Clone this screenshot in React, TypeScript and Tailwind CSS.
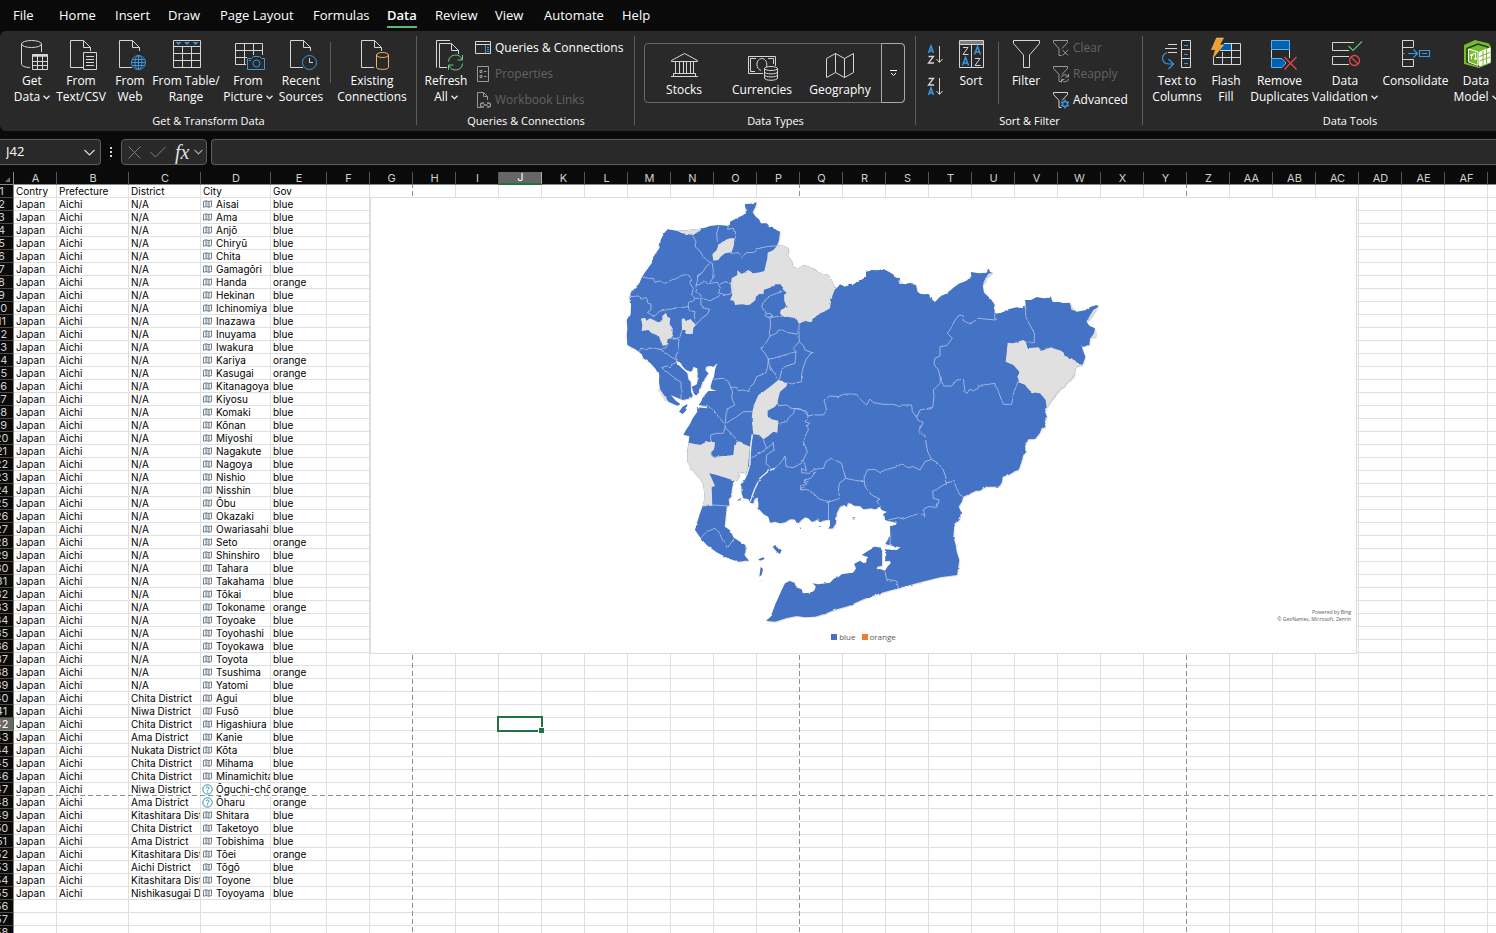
import type { ReactNode } from "react";

const tabs = [
  { name: "File", w: "w-[46px]" },
  { name: "Home", w: "w-[56px]" },
  { name: "Insert", w: "w-[53px]" },
  { name: "Draw", w: "w-[52px]" },
  { name: "Page Layout", w: "w-[93px]" },
  { name: "Formulas", w: "w-[74px]" },
  { name: "Data", w: "w-[48px]" },
  { name: "Review", w: "w-[60px]" },
  { name: "View", w: "w-[49px]" },
  { name: "Automate", w: "w-[78px]" },
  { name: "Help", w: "w-[40px]" },
];

const columns: { name: string; w: string }[] = [
  { name: "A", w: "w-[43px]" },
  { name: "B", w: "w-[72px]" },
  { name: "C", w: "w-[72px]" },
  { name: "D", w: "w-[70px]" },
  { name: "E", w: "w-[56px]" },
  ..."F G H I J K L M N O P Q R S T U V W X Y Z AA AB AC AD AE AF AG AH AI AJ AK AL AM AN AO AP AQ AR AS AT"
    .split(" ")
    .map((name) => ({ name, w: "w-[43px]" })),
];

const cities: [string, string, string][] = (
  "N/A|Aisai|blue;N/A|Ama|blue;N/A|Anjō|blue;N/A|Chiryū|blue;N/A|Chita|blue;N/A|Gamagōri|blue;N/A|Handa|orange;" +
  "N/A|Hekinan|blue;N/A|Ichinomiya|blue;N/A|Inazawa|blue;N/A|Inuyama|blue;N/A|Iwakura|blue;N/A|Kariya|orange;" +
  "N/A|Kasugai|orange;N/A|Kitanagoya|blue;N/A|Kiyosu|blue;N/A|Komaki|blue;N/A|Kōnan|blue;N/A|Miyoshi|blue;" +
  "N/A|Nagakute|blue;N/A|Nagoya|blue;N/A|Nishio|blue;N/A|Nisshin|blue;N/A|Ōbu|blue;N/A|Okazaki|blue;" +
  "N/A|Owariasahi|blue;N/A|Seto|orange;N/A|Shinshiro|blue;N/A|Tahara|blue;N/A|Takahama|blue;N/A|Tōkai|blue;" +
  "N/A|Tokoname|orange;N/A|Toyoake|blue;N/A|Toyohashi|blue;N/A|Toyokawa|blue;N/A|Toyota|blue;N/A|Tsushima|orange;" +
  "N/A|Yatomi|blue;Chita District|Agui|blue;Niwa District|Fusō|blue;Chita District|Higashiura|blue;" +
  "Ama District|Kanie|blue;Nukata District|Kōta|blue;Chita District|Mihama|blue;Chita District|Minamichita|blue;" +
  "Niwa District|Ōguchi-chō|orange;Ama District|Ōharu|orange;Kitashitara District|Shitara|blue;" +
  "Chita District|Taketoyo|blue;Ama District|Tobishima|blue;Kitashitara District|Tōei|orange;" +
  "Aichi District|Tōgō|blue;Kitashitara District|Toyone|blue;Nishikasugai District|Toyoyama|blue"
)
  .split(";")
  .map((r) => r.split("|") as [string, string, string]);

const W = "#d6d6d6";
const G = "#9a9a9a";
const B = "#3a96dd";

function Icon({ children, size = 32 }: { children: ReactNode; size?: number }) {
  return (
    <svg
      aria-hidden="true"
      width={size}
      height={size}
      viewBox={`0 0 ${size} ${size}`}
      fill="none"
      stroke={W}
      className="shrink-0 overflow-visible"
    >
      {children}
    </svg>
  );
}

const Doc = () => <path d="M18 29.500H5.500V2.500H18.500L25.500 9.500V13M18.500 2.500V9.500H25.500" />;

const GetDataIcon = () => (
  <Icon>
    <ellipse cx="15.500" cy="6" rx="10" ry="3.500" />
    <path d="M5.500 6V26C5.500 28 9 29.500 14 29.500M25.500 6V14" />
    <path d="M16.500 16.500H31.500V31.500H16.500ZM16.500 18H31.500M16.500 23.500H31.500M16.500 27.500H31.500M21.500 18V31.500M26.500 18V31.500" />
    <path d="M16.500 17.500H31.500" strokeWidth="2" />
  </Icon>
);
const TextIcon = () => (
  <Icon>
    <Doc />
    <path d="M18.500 14.500H31.500V31.500H18.500Z" />
    <path d="M21 18.500H29M21 21.500H29M21 24.500H29M21 27.500H29" />
  </Icon>
);
const WebIcon = () => (
  <Icon>
    <Doc />
    <g stroke={B}>
      <circle cx="24.500" cy="24.500" r="7" />
      <ellipse cx="24.500" cy="24.500" rx="3.500" ry="7" />
      <path d="M24.500 17.500V31.500M18.500 21.500H30.500M18.500 27.500H30.500M17.500 24.500H31.500" />
    </g>
  </Icon>
);
const TableIcon = () => (
  <Icon>
    <path d="M3.500 2.500H30.500V29.500H3.500ZM3.500 8.500H30.500M3.500 15.500H30.500M3.500 22.500H30.500M12.500 8.500V29.500M21.500 8.500V29.500" />
    <path d="M5.500 4H11.500L8.500 7ZM14 4H20L17 7ZM22.500 4H28.500L25.500 7Z" fill={B} stroke="none" />
  </Icon>
);
const PictureIcon = () => (
  <Icon>
    <path d="M14 26.500H3.500V5.500H30.500V17M3.500 12.500H30.500M3.500 19.500H15M12.500 5.500V26.500M21.500 5.500V17" />
    <path d="M15.500 20.500H19.500L21.500 18.500H27.500L29.500 20.500H32.500V31.500H15.500Z" stroke={B} />
    <circle cx="24.500" cy="25.500" r="3.500" stroke={B} />
    <path d="M17 22.500H19" stroke={B} />
  </Icon>
);
const RecentIcon = () => (
  <Icon>
    <Doc />
    <circle cx="24.500" cy="24.500" r="7" stroke={B} />
    <path d="M24.500 20V24.500H28" />
  </Icon>
);
const ExistingIcon = () => (
  <Icon>
    <Doc />
    <g stroke="#f2b35c">
      <ellipse cx="26.500" cy="17" rx="6" ry="2.500" />
      <path d="M20.500 17V29.500C20.500 32 32.500 32 32.500 29.500V17" />
    </g>
  </Icon>
);
const RefreshIcon = () => (
  <Icon>
    <path d="M20 2.500H6.500V29.500M9.500 29.500H17M9.500 29.500V5.500H21.500L28.500 12.500V16M21.500 5.500V12.500H28.500" />
    <path
      d="M18.500 23.500A7 7 0 0 1 32 21.500M32.500 25.500A7 7 0 0 1 19 27.500M32.500 17V22H27.500M18.500 32V27H23.500"
      stroke="#6cc97f"
    />
  </Icon>
);
const StocksIcon = () => (
  <Icon>
    <path d="M3.500 10.500L16.500 3.500L29.500 10.500V11.500H3.500ZM3 26.500H30M5.500 23.500H27.500V26M5.500 23.500V26M7.500 12V23M11.500 12V23M15.500 12V23M18.500 12V23M22.500 12V23M25.500 12V23" />
  </Icon>
);
const CurrencyIcon = () => (
  <Icon>
    <path d="M17 23.500H2.500V6.500H29.500V16M10 8.500H4.500V21.500H9M22 8.500H27.500V14" />
    <path d="M15 20.500C9.500 19 9.500 9 15.500 8.500C20 8.500 21.500 13 20.500 17" />
    <ellipse cx="25" cy="18.500" rx="6.500" ry="2" />
    <path d="M18.500 18.500V28C18.500 31 31.500 31 31.500 28V18.500M18.500 22C18.500 24.500 31.500 24.500 31.500 22M18.500 25C18.500 27.500 31.500 27.500 31.500 25" />
  </Icon>
);
const MapIcon = () => (
  <Icon>
    <path d="M2.500 8.500L11.500 3.500L20.500 8.500L29.500 3.500V22.500L20.500 27.500L11.500 22.500L2.500 27.500ZM11.500 3.500V22.500M20.500 8.500V27.500" />
  </Icon>
);
const FilterIcon = () => (
  <Icon>
    <path d="M3.500 2.500H29.500V5.500L19.500 17V29.500H13.500V17L3.500 5.500Z" />
  </Icon>
);
const SmallFunnel = () => <path d="M.5 .5H14.500V2.500L9 8.500M.5 .5V2.500L6 8.500V15.500H8.500" />;
const SortIcon = () => (
  <Icon>
    <path d="M4.500 2.500H28.500V29.500H4.500ZM4.500 6.500H28.500M16.500 7V29.500" />
    <path d="M5 4.500H28" stroke="#7d7d7d" strokeWidth="3" />
    <path d="M8 9.500H13L8 16.500H13.500M20 20.500H25L20 27.500H25.500" />
    <path d="M7.500 27.500L10.500 19.500L13.500 27.500M8.500 25H12.500M19.500 16.500L22.500 8.500L25.500 16.500M20.500 14H24.500" stroke={B} strokeWidth="1.500" />
  </Icon>
);
function SortMini({ desc = false }: { desc?: boolean }) {
  return (
    <Icon size={20}>
      <path
        d={desc ? "M2.500 18L5 11L7.500 18M3.500 16H6.500" : "M2.500 8L5 1L7.500 8M3.500 6H6.500"}
        stroke={B}
        strokeWidth="1.500"
      />
      <path d={desc ? "M2.500 1.500H7.500L2.500 8H8" : "M2.500 11.500H7.500L2.500 18H8"} strokeWidth="1.300" />
      <path d="M13.500 1V17M10.500 14L13.500 17.500L16.500 14" />
    </Icon>
  );
}
const TextColsIcon = () => (
  <Icon>
    <path d="M7 6.500H16M4 10.500H16M7 14.500H16M20.500 2.500H29.500V29.500H20.500ZM20.500 11.500H29.500M20.500 20.500H29.500" />
    <path d="M23 7.500H27M23 16.500H27M23 25.500H27M6 14.500C-1 18 .5 26 9 26H12M7.500 21L12.500 26L7.500 31" stroke={B} strokeWidth="1.200" />
  </Icon>
);
const FlashIcon = () => (
  <Icon>
    <path d="M12.500 5.500H21.500V12.500H10Z" fill="#0063b1" stroke="none" />
    <path d="M14 5.500H30.500V26.500H3.500V20M10 12.500H30.500M6 19.500H30.500M12.500 14V26.500M21.500 5.500V26.500" />
    <path d="M6.500 0H13.500L9.500 7H13.500L3 20L5.500 11.500H1.500Z" fill="#f0a030" stroke="#f7c878" strokeWidth=".6" />
  </Icon>
);
const RemoveIcon = () => (
  <Icon>
    <path d="M7.500 2.500H25.500V11.500H7.500ZM7.500 20.500H18L22 25L18 29.500H7.500Z" fill="#0063b1" stroke="#5fb2f2" />
    <path d="M7.500 12V20M25.500 12V20" />
    <path d="M20.500 19L32.500 31.500M32.500 19L20.500 31.500" stroke="#e0474c" strokeWidth="1.300" />
  </Icon>
);
const ValidIcon = () => (
  <Icon>
    <path d="M25 4.500H3.500V12.500H20M20 18.500H3.500V26.500H20" />
    <path d="M19.500 8L24 12.500L33 3.500" stroke="#5fc27a" strokeWidth="1.200" />
    <g stroke="#e0474c" strokeWidth="1.300">
      <circle cx="25.500" cy="22.500" r="5" />
      <path d="M22 19L29 26" />
    </g>
  </Icon>
);
const ConsolidateIcon = () => (
  <Icon>
    <path d="M13.500 9V2.500H2.500V28.500H13.500V21.500H2.500M2.500 9.500H13.500" />
    <path d="M2.500 15.500H5M8 15.500H17M13.500 11.500L17.500 15.500L13.500 19.500M19.500 12.500H29.500V18.500H19.500ZM22 15.500H27" stroke={B} strokeWidth="1.200" />
  </Icon>
);
const ModelIcon = () => (
  <Icon>
    <path d="M4 7L15 2L29 5.500L31 9V25L19 30L4 26Z" fill="#78b82e" stroke="none" />
    <path d="M7 10.500L18 6L28 9V24L19 28L7 24Z" fill="#78b82e" stroke="#1f3a08" strokeWidth="1.500" />
    <path d="M8.500 11L18 14V27.500L8.500 24Z" fill="#78b82e" stroke="#fff" />
    <path d="M19.500 14L30 10V24L19.500 28Z" fill="#fff" stroke="#fff" />
    <path d="M23 13V27M26.500 11.500V25.500M19.500 18.500L30 14.500M19.500 23L30 19" stroke="#78b82e" />
    <path d="M11.500 21V16.500L15.500 15V21M10 18L11.500 16L13 18M14 20L15.500 22L17 20" stroke="#fff" />
  </Icon>
);

function Chevron({ className = "ml-[3px]" }: { className?: string }) {
  return (
    <svg aria-hidden="true" width="7" height="5" viewBox="0 0 7 5" fill="none" stroke="#e6e6e6" className={`inline-block align-middle ${className}`}>
      <path d="M.5 .8L3.500 3.800L6.500 .8" strokeWidth="1.300" />
    </svg>
  );
}

function Big({ w, icon, lines, menu }: { w: string; icon: ReactNode; lines: string[]; menu?: boolean }) {
  return (
    <button type="button" className={`flex shrink-0 flex-col items-center whitespace-nowrap pt-[7px] ${w}`}>
      {icon}
      <span className="mt-[3px] block text-center text-xs leading-4">
        {lines.map((l, i) => (
          <span key={l} className="block">
            {l}
            {menu && i === lines.length - 1 ? <Chevron /> : null}
          </span>
        ))}
      </span>
    </button>
  );
}

function Small({ icon, text, off }: { icon: ReactNode; text: string; off?: boolean }) {
  return (
    <button
      type="button"
      disabled={off}
      className={`flex h-[26px] items-center gap-1 whitespace-nowrap text-xs ${off ? "text-[#636363]" : "text-white"}`}
    >
      {icon}
      {text}
    </button>
  );
}

function Group({ label, w, children }: { label: string; w: string; children: ReactNode }) {
  return (
    <section aria-label={label} className={`relative flex h-[100px] shrink-0 flex-col ${w}`}>
      <div className="flex h-[81px]">{children}</div>
      <div className="text-center text-[11px] leading-[18px]">{label}</div>
      <div className="absolute right-0 top-[5px] h-[89px] w-px bg-[#5c5c5c]" />
    </section>
  );
}

function Ribbon() {
  return (
    <div className="flex h-[100px] shrink-0 overflow-hidden rounded-l-md bg-[#292929] text-white">
      <Group label="Get &amp; Transform Data" w="w-[417px]">
        <div className="flex pl-[7px]">
          <Big w="w-[50px]" icon={<GetDataIcon />} lines={["Get", "Data"]} menu />
          <Big w="w-[48px]" icon={<TextIcon />} lines={["From", "Text/CSV"]} />
          <Big w="w-[50px]" icon={<WebIcon />} lines={["From", "Web"]} />
          <Big w="w-[62px]" icon={<TableIcon />} lines={["From Table/", "Range"]} />
          <Big w="w-[62px]" icon={<PictureIcon />} lines={["From", "Picture"]} menu />
          <Big w="w-[44px]" icon={<RecentIcon />} lines={["Recent", "Sources"]} />
          <div className="ml-[7px] mr-[6px] mt-[11px] h-[41px] w-px shrink-0 bg-[#5c5c5c]" />
          <Big w="w-[70px]" icon={<ExistingIcon />} lines={["Existing", "Connections"]} />
        </div>
      </Group>
      <Group label="Queries &amp; Connections" w="w-[218px]">
        <div className="flex pl-[6px]">
          <Big w="w-[46px]" icon={<RefreshIcon />} lines={["Refresh", "All"]} menu />
          <div className="ml-[6px] mt-[4px]">
            <Small
              text="Queries & Connections"
              icon={
                <Icon size={16}>
                  <path d="M.5 1.500H15.500V13.500H.5ZM.5 4.500H15.500" />
                  <path d="M10.500 5V13M12 7.500H14M12 9.500H14M12 11.500H14" stroke={B} />
                </Icon>
              }
            />
            <Small
              off
              text="Properties"
              icon={
                <Icon size={16}>
                  <path d="M2.500 .5H13.500V15.500H2.500ZM5 4.500H7V6.500H5ZM5 9.500H7V11.500H5ZM9 5.500H11.500M9 10.500H11.500" stroke={G} />
                </Icon>
              }
            />
            <Small
              off
              text="Workbook Links"
              icon={
                <Icon size={16}>
                  <path d="M6 15.500H2.500V.5H8.500L12.500 4.500V8M8.500 .5V4.500H12.500" stroke={G} />
                  <path d="M9 11H7.500A2 2 0 0 0 7.500 15H9M12 11H13.500A2 2 0 0 1 13.500 15H12M8.500 13H12.500" stroke={G} strokeWidth="1.300" />
                </Icon>
              }
            />
          </div>
        </div>
      </Group>
      <Group label="Data Types" w="w-[281px]">
        <div className="ml-[9px] mt-3 flex h-[60px] w-[261px] rounded border border-[#6a6a6a]">
          {[
            { t: "Stocks", i: <StocksIcon /> },
            { t: "Currencies", i: <CurrencyIcon /> },
            { t: "Geography", i: <MapIcon /> },
          ].map((x) => (
            <button type="button" key={x.t} className="flex w-[78px] shrink-0 flex-col items-center pt-[6px]">
              {x.i}
              <span className="text-xs leading-4">{x.t}</span>
            </button>
          ))}
          <button
            type="button"
            aria-label="More data types"
            className="-my-px -mr-px ml-auto grid w-[24px] place-items-center rounded-r border border-[#a8a8a8]"
          >
            <svg aria-hidden="true" width="9" height="8" viewBox="0 0 9 8" fill="none" stroke="#fff">
              <path d="M1 1.500H8M2 4L4.500 6.500L7 4" />
            </svg>
          </button>
        </div>
      </Group>
      <Group label="Sort &amp; Filter" w="w-[227px]">
        <div className="flex pl-[8px]">
          <div className="mt-[14px] flex w-[24px] flex-col items-center gap-3">
            <button type="button" aria-label="Sort A to Z">
              <SortMini />
            </button>
            <button type="button" aria-label="Sort Z to A">
              <SortMini desc />
            </button>
          </div>
          <Big w="w-[46px]" icon={<SortIcon />} lines={["Sort"]} />
          <div className="ml-[4px] mr-[4px] mt-[11px] h-[62px] w-px shrink-0 bg-[#5c5c5c]" />
          <Big w="w-[46px]" icon={<FilterIcon />} lines={["Filter"]} />
          <div className="ml-[4px] mt-[4px]">
            <Small
              off
              text="Clear"
              icon={
                <Icon size={16}>
                  <g stroke={G}>
                    <SmallFunnel />
                    <path d="M9.500 10L15 15.500M15 10L9.500 15.500" />
                  </g>
                </Icon>
              }
            />
            <Small
              off
              text="Reapply"
              icon={
                <Icon size={16}>
                  <g stroke={G}>
                    <SmallFunnel />
                    <path d="M8.500 11.500A3.500 3.500 0 0 1 15 10.500M15.500 8V11H12.500M15.500 13A3.500 3.500 0 0 1 9 14M8.500 16.500V13.500H11.500" />
                  </g>
                </Icon>
              }
            />
            <Small
              text="Advanced"
              icon={
                <Icon size={16}>
                  <SmallFunnel />
                  <circle cx="12" cy="12" r="2.500" stroke={B} strokeWidth="1.500" />
                  <path d="M12 7.500V9M12 15V16.500M8 10L9.500 11M14.500 13L16 14M8 14L9.500 13M14.500 11L16 10" stroke={B} strokeWidth="1.500" />
                </Icon>
              }
            />
          </div>
        </div>
      </Group>
      <Group label="Data Tools" w="w-[414px]">
        <div className="flex pl-[10px]">
          <Big w="w-[48px]" icon={<TextColsIcon />} lines={["Text to", "Columns"]} />
          <Big w="w-[50px]" icon={<FlashIcon />} lines={["Flash", "Fill"]} />
          <Big w="w-[57px]" icon={<RemoveIcon />} lines={["Remove", "Duplicates"]} />
          <Big w="w-[74px]" icon={<ValidIcon />} lines={["Data", "Validation"]} menu />
          <Big w="w-[67px]" icon={<ConsolidateIcon />} lines={["Consolidate"]} />
          <Big w="w-[54px]" icon={<ModelIcon />} lines={["Data", "Model"]} menu />
        </div>
      </Group>
    </div>
  );
}

function FormulaBar() {
  return (
    <div className="mt-2 flex h-[26px] shrink-0 gap-1 overflow-hidden text-white">
      <div className="flex w-[101px] shrink-0 items-center rounded-r border border-l-0 border-[#5e5e5e] bg-[#292929] pl-[6px] pr-[5px]">
        <input aria-label="Name box" defaultValue="J42" className="w-0 grow bg-transparent text-[13px] outline-none" />
        <button type="button" aria-label="Open name list">
          <svg aria-hidden="true" width="11" height="7" viewBox="0 0 11 7" fill="none" stroke="#d6d6d6">
            <path d="M.5 1L5.500 6L10.500 1" strokeWidth="1.200" />
          </svg>
        </button>
      </div>
      <svg aria-hidden="true" width="12" height="26" viewBox="0 0 12 26" fill="#d6d6d6" className="shrink-0">
        <path d="M5 8h2v2H5zM5 12h2v2H5zM5 16h2v2H5z" />
      </svg>
      <div className="flex w-[86px] shrink-0 items-center rounded border border-[#5e5e5e] bg-[#292929] pl-[6px]">
        <button type="button" aria-label="Cancel">
          <svg aria-hidden="true" width="13" height="13" viewBox="0 0 13 13" fill="none" stroke="#7e7e7e">
            <path d="M.5 .5L12.500 12.500M12.500 .5L.5 12.500" />
          </svg>
        </button>
        <button type="button" aria-label="Enter" className="ml-[9px]">
          <svg aria-hidden="true" width="16" height="12" viewBox="0 0 16 12" fill="none" stroke="#7e7e7e">
            <path d="M.5 6L5.500 11L15.500 .8" />
          </svg>
        </button>
        <button type="button" aria-label="Insert function" className="ml-[9px] font-['Liberation_Serif',serif] text-xl italic leading-5 text-[#e0e0e0]">
          fx
        </button>
        <svg aria-hidden="true" width="9" height="6" viewBox="0 0 9 6" fill="none" stroke="#a6a6a6" className="ml-[5px]">
          <path d="M.5 .8L4.500 4.800L8.500 .8" strokeWidth="1.200" />
        </svg>
      </div>
      <input aria-label="Formula bar" className="w-0 grow rounded-l border border-r-0 border-[#5e5e5e] bg-[#292929] px-2 text-xs outline-none" />
    </div>
  );
}

/* Prefecture drawing, in thirds of a pixel. */
const outline =
  "M434 27L452 26L470 22L466 35L458 52L466 64L478 74L482 85L500 85L508 94L520 97L528 104L540 110L537 135L531 152L545 150L564 158L567 168L562 180L575 198L580 217L597 220L610 209L630 216L648 228L668 237L682 238L692 248L700 268L706 280L713 277L720 268L735 275L748 266L760 268L780 257L798 245L798 230L815 225L832 226L850 222L868 231L882 240L888 248L900 249L897 265L915 268L932 263L938 268L948 270L953 290L960 296L972 298L986 297L995 313L1005 321L1020 305L1040 295L1062 277L1080 264L1095 261L1115 243L1112 231L1138 235L1160 233L1166 221L1170 231L1177 233L1160 250L1148 273L1152 293L1170 310L1183 327L1184 358L1205 353L1225 343L1250 337L1265 340L1277 331L1275 315L1293 315L1310 306L1330 310L1353 308L1358 321L1376 321L1390 324L1410 323L1414 343L1430 350L1455 346L1472 335L1490 330L1496 335L1485 350L1472 370L1458 378L1468 392L1485 400L1482 415L1488 427L1470 430L1468 450L1450 455L1444 453L1456 485L1453 495L1447 510L1426 517L1424 543L1400 565L1375 590L1355 615L1340 640L1335 650L1341 665L1334 680L1340 695L1325 700L1320 713L1305 732L1285 733L1275 750L1276 768L1268 785L1262 810L1255 825L1245 828L1230 838L1208 845L1205 863L1197 875L1155 875L1140 887L1128 887L1115 893L1090 905L1085 920L1076 935L1083 950L1080 970L1063 987L1060 1025L1067 1050L1070 1070L1078 1095L1075 1115L1071 1140L1020 1147L960 1162L895 1180L840 1195L790 1213L745 1233L705 1244L670 1258L645 1265L615 1267L590 1263L560 1269L525 1280L498 1277L512 1265L525 1230L545 1185L555 1165L570 1157L583 1162L588 1177L605 1183L608 1195L630 1193L645 1183L647 1173L637 1165L655 1168L690 1163L703 1150L715 1147L725 1138L745 1135L760 1133L768 1120L762 1107L780 1097L790 1104L798 1103L802 1085L785 1080L805 1067L825 1055L846 1058L846 1112L832 1115L830 1123L840 1122L855 1127L862 1115L872 1105L870 1097L856 1099L855 1063L890 1065L902 1057L880 1053L868 1050L856 1047L866 1030L871 1027L870 993L888 989L890 983L870 979L855 975L852 955L862 951L845 945L840 937L825 943L812 940L790 943L780 933L762 932L745 920L740 935L732 930L720 935L710 955L708 985L698 1000L685 1001L690 993L690 975L675 975L660 980L652 970L645 978L635 980L625 970L615 967L605 974L595 985L582 973L570 973L555 982L540 985L525 980L510 983L505 965L490 957L475 940L475 920L470 907L462 915L460 925L450 923L445 912L430 910L425 895L424 870L437 850L445 830L450 815L446 812L443 822L438 835L412 830L420 840L408 858L400 852L398 873L393 890L394 905L386 912L388 930L380 935L377 965L374 995L390 1005L400 1027L420 1040L436 1050L437 1067L433 1080L447 1097L435 1097L415 1100L405 1093L395 1095L350 1072L320 1050L300 1027L285 1005L292 980L300 955L308 933L314 905L310 870L298 850L275 825L262 800L262 765L266 740L268 723L250 719L258 705L270 687L278 670L292 650L290 637L322 640L318 633L296 630L302 622L312 603L325 588L350 588L330 580L338 553L342 545L345 525L352 503L340 515L330 512L318 515L316 525L325 535L315 550L303 572L290 600L283 598L275 575L283 572L293 560L292 520L280 515L275 530L258 525L235 500L228 495L230 505L262 535L265 553L272 560L273 590L280 605L262 612L248 615L212 600L228 618L240 625L232 632L205 620L190 600L180 585L177 560L178 540L165 520L150 503L130 490L125 478L110 465L82 450L80 420L82 400L80 375L92 355L93 330L91 292L105 280L118 265L126 245L140 225L155 205L160 185L178 160L182 135L192 115L203 103L230 107L260 106L310 100L330 93L355 90L385 92L390 80L410 70L430 60L438 52Z";

const blanks = [
  "M531 152L545 150L564 158L567 168L562 180L575 198L580 217L597 220L610 209L630 216L648 228L668 237L682 238L692 248L700 268L706 280L698 300L693 318L690 340L672 350L655 358L640 372L634 382L618 377L597 386L588 370L565 366L547 364L540 355L543 345L560 335L553 318L552 300L560 293L550 285L542 268L525 268L510 278L492 284L490 296L478 297L468 305L466 316L448 330L425 328L405 330L402 318L390 315L397 300L392 275L395 250L412 240L412 226L425 237L445 225L460 235L480 232L493 228L497 210L502 190L503 173L520 165Z",
  "M123 372L135 368L140 377L150 370L175 382L187 377L187 363L198 353L202 365L211 370L209 388L218 400L217 430L203 432L200 450L188 452L182 435L170 420L155 415L145 405L125 408L127 390Z",
  "M245 372L253 370L257 378L272 372L278 380L287 388L280 400L278 417L258 417L256 405L246 405Z",
  "M403 130L402 150L395 172L375 175L362 185L355 195L340 197L337 178L350 165L355 150L375 135L390 130Z",
  "M535 555L563 562L558 575L540 590L535 610L532 625L525 635L503 647L503 663L515 673L535 677L532 713L520 710L505 723L490 733L478 720L460 718L455 675L457 650L462 630L475 600L490 590L510 575Z",
  "M266 743L300 750L320 740L345 742L343 760L333 780L345 785L400 780L403 750L415 740L450 755L445 805L443 822L438 835L412 830L420 840L408 858L380 850L350 840L328 835L335 850L345 873L335 877L337 933L308 933L314 905L310 870L298 850L275 825L262 800L262 765Z",
  "M1223 443L1240 445L1270 435L1277 440L1283 460L1315 457L1325 467L1350 457L1385 468L1395 483L1415 490L1426 500L1447 510L1426 517L1424 543L1400 565L1375 590L1355 615L1340 640L1337 615L1320 595L1295 592L1280 577L1258 560L1252 545L1258 530L1240 510L1217 500L1220 475Z",
  "M230 107L260 106L310 100L280 120L245 115Z",
  "M172 582L180 582L205 620L192 618Z",
  "M1177 233L1160 250L1148 273L1152 258L1165 236ZM1496 335L1472 370L1462 375L1480 345ZM1488 427L1470 432L1482 415L1488 405L1492 425ZM897 265L895 252L905 268ZM953 290L948 272L956 292ZM1412 325L1425 348L1414 343Z",
];

const borders =
  "M278 122L288 140L285 155L300 168L310 185L322 197L337 205L340 230L338 250L330 262M357 92L350 115L352 140M385 92L383 103L400 100L407 125L403 135M390 175L415 173L425 185L440 173L465 172L470 162L500 155L531 152M330 205L318 215L308 232L292 242L293 255L288 270L290 290L302 300L305 310L330 317L358 303L362 280L352 262L330 265L310 258L300 268L288 270M360 268L375 260L392 265L398 280L392 297L375 300L362 295" +
  "M126 245L145 250L160 250L165 262L180 258L195 265L215 255L230 250L250 240L268 242L272 250L270 265L280 280L275 300L285 310L280 318L265 322L265 335M93 305L115 303L125 310L142 308L142 325L153 327L153 345L142 352L155 360L165 362L180 348L225 340L265 335L268 347L285 350L283 365L290 385M285 310L302 310L303 330L315 340L330 343L322 358L305 370L290 388L283 395M246 405L240 425L218 432L237 432L235 450L238 465L228 480L228 495M118 470L122 460L140 463L155 458L180 463L198 458L205 445M180 463L200 475L212 485L228 495M228 503L215 508L212 515L200 513L185 518L200 530L225 550L243 562L243 612" +
  "M550 290L530 295L512 302L490 320L485 335L497 350L495 362L510 370L512 390L508 415L510 423L500 440L482 460L495 475L505 492L503 515L497 535L470 545L462 565L448 578L447 590L430 585L413 587L410 577L392 577L385 560L370 550L338 553M498 355L515 356L518 364L505 366M510 370L525 365L547 364M510 423L530 415L535 405L548 405L560 412L595 418M597 386L597 418L598 440L580 460L588 470L560 478L520 490L505 492M598 440L610 452L615 465L637 473L620 490L612 510L605 535L605 560L575 567L563 562M588 470L585 505L555 515L545 525L540 550L533 555M505 492L508 510L520 530L530 550" +
  "M392 577L398 590L395 610L405 630L385 640L378 655L376 685M304 635L325 635L345 650L355 665L372 685L378 700L395 718L410 733L415 740M372 690L392 676L410 665L430 650L457 650M376 695L370 715L350 715L332 720L332 740M457 718L452 755L450 812M490 733L495 748L500 760L480 775L452 790M500 760L520 745L522 765L500 780L498 805L515 823L525 820L540 805L555 783L558 815L580 818L605 805L612 790L622 770L610 740L615 725L625 705L622 690L630 685L615 680L625 663L605 643L585 640L580 655L565 670L560 680L535 685M530 615L535 632L560 630L575 640L605 643L620 650L625 663L640 660L670 660L680 645L672 615L690 603L715 605L730 598L750 597L770 598L780 612L800 630L810 612L820 623L850 628L880 628L900 635L905 630L935 630L937 650L950 667" +
  "L960 645L998 637L1002 605L1000 585L1022 563L1020 545L1015 525L1002 505L1005 490L1020 483L1020 455L1040 452L1057 430L1042 415L1055 397L1065 375L1078 360L1090 362L1090 377L1110 387L1135 370L1185 375L1184 358M1022 545L1030 573L1055 573L1070 555L1090 553L1095 590L1102 595L1108 583L1120 587L1135 580L1135 570L1150 570L1185 565L1197 595L1210 628L1235 628L1242 590L1255 557M1277 331L1277 365L1290 390L1303 415L1303 443L1277 443M950 667L955 677L970 682L957 707L975 725L982 765L985 775L995 793L1015 805L1030 825L1040 855L1038 865L1015 880L998 890L1000 910L1018 915L1010 937L985 935L970 945L975 962L960 955L935 962L910 972L895 968L865 975M1038 863L1062 860L1070 880L1080 900L1090 905" +
  "M995 793L975 800L960 825L940 815L925 818L905 807L885 817L855 825L840 833L825 823L802 825L792 850L795 875L815 900L840 913L830 918L843 937M792 860L760 855L737 850L730 825L725 805L695 790L678 800L670 820L645 823L625 835L605 833L605 820L620 828L612 800M737 850L718 865L715 890L720 910L690 920L678 918L660 913L640 895L620 883L602 885L602 872L620 868L612 855L632 850L648 830M605 880L614 876M610 862L626 860M686 920L685 975M855 1130L860 1153L890 1158L895 1180M871 1027L870 1050M303 1028L320 1010L345 1000L360 1018L370 1040L383 1058L403 1030M308 933L340 930L385 933";

const islands =
  "M262 627L260 645L248 657L237 650L248 635ZM475 1093L490 1087L494 1092L480 1097ZM518 1055L526 1050L530 1057L545 1065L540 1077L530 1070ZM482 1115L489 1122L485 1140L478 1145ZM485 1155L490 1162L486 1162ZM410 917L424 908L420 916ZM598 998L604 998L602 1002ZM756 968L766 966L762 971ZM655 993L662 992L660 998Z";

function MapChart() {
  return (
    <figure
      aria-label="Map of Aichi municipalities"
      className="absolute left-[370px] top-[25px] h-[457px] w-[987px] border border-[#dcdcdc] bg-white font-['Open_Sans',sans-serif] text-[#595959]"
    >
      <svg aria-hidden="true" width="985" height="455" viewBox="-687 9 2955 1365" fill="none" strokeLinejoin="round">
        <filter id="coast" x="0" y="0" width="100%" height="100%" colorInterpolationFilters="sRGB">
          <feTurbulence type="fractalNoise" baseFrequency="0.06" numOctaves="2" seed="4" />
          <feDisplacementMap in="SourceGraphic" scale="7" xChannelSelector="R" yChannelSelector="G" />
        </filter>
        <g filter="url(#coast)">
          <path d={outline} fill="#e3e3e3" transform="translate(3 3)" />
          <path d={outline} fill="#4472c4" />
          {blanks.map((d) => (
            <path key={d} d={d} fill="#e0e0e0" />
          ))}
          <path d={islands} fill="#4472c4" />
          <path d={borders} stroke="#b9c9ea" strokeWidth="2.300" />
          <path d="M525 820L505 828L480 850L465 880L450 920M457 718L452 755L449 812" stroke="#e8eefa" strokeWidth="4" />
        </g>
      </svg>
      <figcaption className="absolute inset-x-0 bottom-[11px] flex items-center justify-center gap-[6px] text-[8px] leading-[10px]">
        <span className="flex items-center gap-[2px]">
          <span className="size-[6px] bg-[#4472c4]" />
          blue
        </span>
        <span className="flex items-center gap-[2px]">
          <span className="size-[6px] bg-[#ed7d31]" />
          orange
        </span>
      </figcaption>
      <p className="absolute bottom-[30px] right-[5px] text-right text-[5px] leading-[7px]">
        Powered by Bing
        <br />© GeoNames, Microsoft, Zenrin
      </p>
    </figure>
  );
}

function CityIcon({ unknown }: { unknown: boolean }) {
  return unknown ? (
    <svg aria-hidden="true" width="11" height="11" viewBox="0 0 11 11" fill="none" stroke="#2a93a6" className="-ml-px mr-[3px] shrink-0">
      <circle cx="5.500" cy="5.500" r="4.700" />
      <path d="M4 4.300C4 2.500 7 2.500 7 4.300C7 5.500 5.500 5.300 5.500 6.800M5.500 7.600V8.600" />
    </svg>
  ) : (
    <svg aria-hidden="true" width="9" height="8" viewBox="0 0 9 8" fill="none" className="mr-1 shrink-0">
      <path d="M3 1V6.500L6 7V1.500Z" fill="#bfe0f5" />
      <path d="M.5 1.500L3 .8L6 1.500L8.500 .8V6.500L6 7.300L3 6.500L.5 7.300ZM3 .8V6.500M6 1.500V7.300" stroke="#6b7078" strokeWidth=".9" />
    </svg>
  );
}

function Sheet() {
  const rows = Array.from({ length: 64 }, (_, i) => i + 1);
  const cell = "h-[13px] overflow-hidden whitespace-nowrap border-b border-r border-[#dfdfdf] p-0 pl-[2px] leading-3";
  const text = (r: number, c: number): ReactNode => {
    if (r === 1) return ["Contry", "Prefecture", "District", "City", "Gov"][c] ?? null;
    const row = cities[r - 2];
    if (!row || c > 4) return null;
    if (c === 3)
      return (
        <span className="flex items-center">
          <CityIcon unknown={r === 47 || r === 48} />
          {row[1]}
        </span>
      );
    return ["Japan", "Aichi", row[0], "", row[2]][c];
  };
  return (
    <main className="relative mt-[7px] min-h-0 grow overflow-hidden bg-white font-['Inter',sans-serif] text-[10px] text-black">
      <table className="w-full table-fixed border-separate border-spacing-0">
        <colgroup>
          <col className="w-[14px]" />
          {columns.map((c) => (
            <col key={c.name} className={c.w} />
          ))}
        </colgroup>
        <thead>
          <tr className="bg-[#0a0a0a] text-[11px] text-[#d0d0d0]">
            <td className="h-[13px] border-b border-r border-[#8a8a8a] p-0">
              <svg aria-hidden="true" width="13" height="12" viewBox="0 0 13 12" className="block">
                <path d="M10 5V10H5Z" fill="#6e6e6e" />
              </svg>
            </td>
            {columns.map((c) => (
              <th
                key={c.name}
                scope="col"
                className={`h-[13px] border-r p-0 pl-px text-center font-normal ${
                  c.name === "J"
                    ? "border-b-2 border-b-[#217346] border-r-[#b0b0b0] bg-[#666666] leading-[11px] text-white"
                    : "border-b border-b-[#8a8a8a] border-r-[#555555] leading-3"
                }`}
              >
                {c.name}
              </th>
            ))}
          </tr>
        </thead>
        <tbody>
          {rows.map((r) => (
            <tr key={r}>
              <th
                scope="row"
                className={`h-[13px] border-b border-r p-0 text-[11px] font-normal leading-3 ${
                  r === 42
                    ? "border-b-[#8a8a8a] border-r-[#217346] bg-[#666666] text-white"
                    : "border-b-[#4a4a4a] border-r-[#8a8a8a] bg-[#0a0a0a] text-[#d0d0d0]"
                }`}
              >
                <span className="-ml-[10px] block text-center">{r}</span>
              </th>
              {columns.map((c, i) => (
                <td key={c.name} className={cell}>
                  {text(r, i)}
                </td>
              ))}
            </tr>
          ))}
        </tbody>
      </table>
      {["left-[412px]", "left-[799px]", "left-[1186px]"].map((l) => (
        <div
          key={l}
          className={`absolute bottom-0 top-[13px] w-px bg-[repeating-linear-gradient(to_bottom,#8f8f8f_0px,#8f8f8f_3px,#ffffff_3px,#ffffff_6px,#8f8f8f_6px,#8f8f8f_8px)] ${l}`}
        />
      ))}
      <div className="absolute left-[14px] right-0 top-[623px] h-px bg-[repeating-linear-gradient(to_right,#ffffff_0px,#ffffff_2px,#8f8f8f_2px,#8f8f8f_7px,#ffffff_7px,#ffffff_8px)]" />
      <MapChart />
      <div className="absolute left-[497px] top-[544px] h-[16px] w-[46px] border-2 border-[#217346]">
        <div className="absolute -bottom-[3px] -right-[3px] size-[6px] border-l border-t border-white bg-[#217346]" />
      </div>
    </main>
  );
}

export default function App() {
  return (
    <div className="flex h-screen flex-col overflow-hidden bg-[#0a0a0a] font-['Open_Sans',sans-serif]">
      <nav aria-label="Ribbon tabs" className="flex h-[31px] shrink-0 items-start pl-[13px] pt-[6px] text-[13px] text-white">
        {tabs.map((t) => (
          <div key={t.name} className={`shrink-0 ${t.w}`}>
            <button
              type="button"
              className={`block h-[22px] whitespace-nowrap pb-[2px] leading-[18px] ${
                t.name === "Data" ? "border-b-2 border-[#5bb878] font-semibold" : "border-b-2 border-transparent"
              }`}
            >
              {t.name}
            </button>
          </div>
        ))}
      </nav>
      <Ribbon />
      <FormulaBar />
      <Sheet />
    </div>
  );
}
